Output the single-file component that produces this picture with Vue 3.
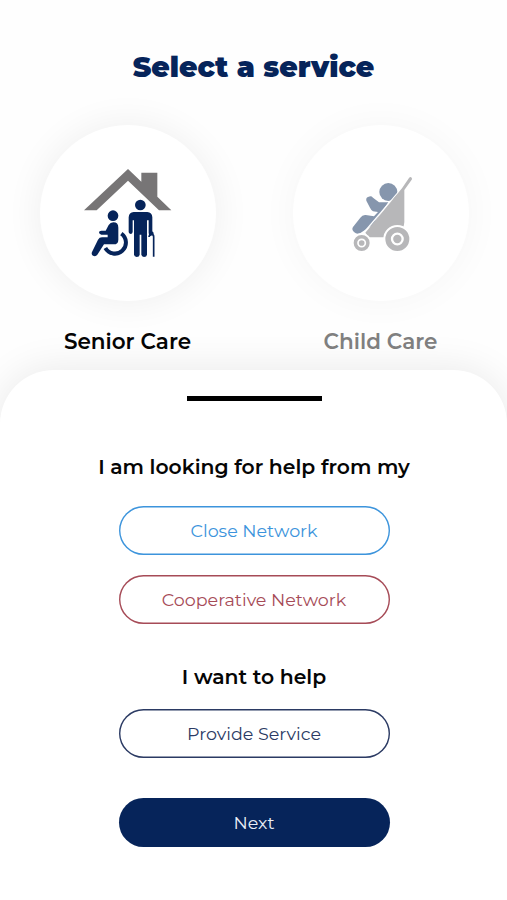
<template>
  <main class="service-page">
    <h1 class="service-title">Select a service</h1>

    <div class="service-list">
      <div
        v-for="service in services"
        :key="service.id"
        class="service-item"
        :class="[service.id, { inactive: selected !== service.id }]"
        @click="selected = service.id"
      >
        <div class="service-circle">
          <svg v-if="service.id === 'senior'" width="88" height="90" viewBox="12 24 264 270">
            <!-- roof -->
            <path fill="#777576" d="M144 27 184 65V38H232V110L274 151H237L144 62 50 151H12Z" />
            <!-- wheelchair -->
            <g fill="#06245a">
              <circle cx="99" cy="167" r="16" />
              <path d="M100 187Q115 187 115 203V239Q115 253 101 253H72L52 284Q47 291 39 287 33 283 36 276L54 239Q58 232 66 232H83V224H64Q57 223 57 217 57 212 64 212H77L86 195Q91 187 100 187Z" />
            </g>
            <path class="line" stroke-width="12" d="M124 221A33 33 0 1 1 76 264" />
            <!-- standing person with a cane -->
            <g fill="#06245a">
              <circle cx="181" cy="135" r="16" />
              <path d="M161 156H202Q216 157 217 172V214L222 220 208 230 206 218V181H201V284Q200 291 192 291 185 290 184 284V224H179V284Q178 291 170 291 163 290 162 284V181H158V216Q157 222 152 222 146 221 146 216V172Q147 157 161 156Z" />
            </g>
            <path class="line" stroke-width="5" d="M207 231Q208 224 215 223 221 223 221 230V290" />
          </svg>

          <svg v-else width="64" height="80" viewBox="27 24 192 240">
            <!-- baby -->
            <circle cx="145" cy="81" r="27" fill="#8696ad" />
            <path fill="#8696ad" d="M79 107Q77 97 86 95 94 92 99 98L117 112H145L97 181 61 204Q51 210 42 201 34 194 39 186L61 158Q67 149 77 150L102 154 114 141 99 139Q94 136 90 128Z" />
            <!-- seat and handle -->
            <path fill="none" stroke="#fff" stroke-width="4" d="M190 64 73 201" />
            <path fill="#b7b7b9" d="M186 70 207 39Q211 34 215 38 218 41 214 46L193 75V171Q192 190 176 217H86L76 203Z" />
            <!-- wheels -->
            <circle cx="172" cy="222" r="39" fill="#b7b7b9" stroke="#fff" stroke-width="6" />
            <circle cx="172" cy="222" r="16" fill="#b7b7b9" stroke="#fff" stroke-width="7" />
            <circle cx="65" cy="234" r="27" fill="#b7b7b9" stroke="#fff" stroke-width="6" />
            <circle cx="65" cy="234" r="11" fill="#b7b7b9" stroke="#fff" stroke-width="5" />
          </svg>
        </div>
        <span class="service-label">{{ service.label }}</span>
      </div>
    </div>

    <section class="sheet">
      <div class="sheet-handle" />
      <h2 class="sheet-heading looking">I am looking for help from my</h2>
      <button class="btn close">Close Network</button>
      <button class="btn cooperative">Cooperative Network</button>
      <h2 class="sheet-heading want">I want to help</h2>
      <button class="btn provide">Provide Service</button>
      <button class="btn next">Next</button>
    </section>
  </main>
</template>

<script setup>
import { ref } from 'vue'

const services = [
  { id: 'senior', label: 'Senior Care' },
  { id: 'child', label: 'Child Care' }
]

const selected = ref('senior')
</script>

<style>
body {
  margin: 0;
  background: #fff;
}
</style>

<style scoped>
.service-page {
  display: flex;
  flex-direction: column;
  height: 900px;
  overflow: hidden;
  background: #fefefe;
  font-family: Montserrat, Inter, "Liberation Sans", sans-serif;
}

.service-title {
  margin: 47px 0 0;
  text-align: center;
  font-size: 28.3px;
  line-height: 40px;
  font-weight: 900;
  color: #06245a;
}

.service-list {
  display: flex;
  justify-content: space-between;
  padding: 38px 38px 0 40px;
}

.service-item {
  display: flex;
  flex-direction: column;
  align-items: center;
  width: 176px;
  cursor: pointer;
}

.service-circle {
  display: flex;
  align-items: center;
  justify-content: center;
  width: 176px;
  height: 176px;
  border-radius: 50%;
  background: #fff;
  box-shadow: 0 0 34px 4px rgba(0, 0, 0, 0.055);
}

.inactive .service-circle {
  box-shadow: 0 0 34px 4px rgba(0, 0, 0, 0.03);
}

.line {
  fill: none;
  stroke: #06245a;
}

.service-label {
  margin-top: 25px;
  padding-right: 1px;
  font-size: 21.5px;
  line-height: 30px;
  font-weight: 600;
  white-space: nowrap;
  color: #050505;
}

.inactive .service-label {
  color: #808080;
}

.sheet {
  display: flex;
  flex: 1;
  flex-direction: column;
  align-items: center;
  margin-top: 13.5px;
  padding-left: 1px;
  border-radius: 54px 54px 0 0;
  background: #fff;
  box-shadow: 0 0 40px rgba(0, 0, 0, 0.09);
}

.sheet-handle {
  width: 135px;
  height: 4.5px;
  margin-top: 26.5px;
  background: #000;
}

.sheet-heading {
  margin: 0;
  font-size: 20.35px;
  line-height: 30px;
  font-weight: 600;
  white-space: nowrap;
  color: #050505;
}

.looking {
  margin-top: 51.5px;
}

.want {
  margin-top: 38px;
}

.btn {
  box-sizing: border-box;
  width: 271px;
  height: 49px;
  padding: 0;
  border: 0;
  border-radius: 25px;
  background: #fff;
  box-shadow: inset 0 0 0 1.4px currentColor;
  font-family: inherit;
  font-size: 17.5px;
  font-weight: 400;
  cursor: pointer;
}

.close {
  margin-top: 24px;
  color: #3c94dc;
}

.cooperative {
  margin-top: 20px;
  color: #a64b57;
}

.provide {
  margin-top: 17px;
  color: #2b3a63;
}

.next {
  margin-top: 40px;
  background: #06245a;
  box-shadow: none;
  color: #e9eef6;
}
</style>
